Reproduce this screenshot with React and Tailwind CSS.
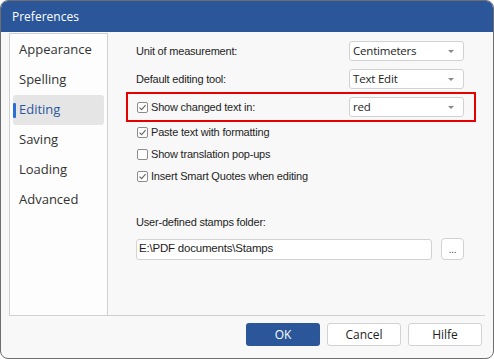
import React from "react";

function Caret() {
  return (
    <svg width="6" height="3" viewBox="0 0 6 3" className="shrink-0">
      <path d="M0 0 L6 0 L3 3 Z" fill="#8a8a8a" />
    </svg>
  );
}

function Dropdown({ value }) {
  return (
    <div className="w-[115px] h-[20px] bg-white border border-[#d2d2d2] rounded-[3px] flex items-center justify-between pl-[3px] pr-[9px] text-[11.5px] text-[#1e1e1e] font-['Open_Sans',sans-serif]">
      <span>{value}</span>
      <Caret />
    </div>
  );
}

function Box({ checked }) {
  return (
    <div className="w-[11px] h-[11px] bg-white border border-[#8c8c8c] rounded-[2px] flex items-center justify-center mr-[3px]">
      {checked && (
        <svg width="9" height="9" viewBox="0 0 9 9">
          <path d="M1.5 4.6 L3.6 6.7 L7.6 2.2" fill="none" stroke="#6a6a6a" strokeWidth="1.2" />
        </svg>
      )}
    </div>
  );
}

function Check({ checked, label }) {
  return (
    <div className="flex items-center h-[22px] pl-[1px]">
      <Box checked={checked} />
      <span>{label}</span>
    </div>
  );
}

export default function App() {
  const nav = ["Appearance", "Spelling", "Editing", "Saving", "Loading", "Advanced"];

  return (
    <div className="w-[494px] h-[359px] bg-[#f8f8f8] border border-[#6e6e6e] rounded-[8px] overflow-hidden flex flex-col font-['Liberation_Sans',Arial,sans-serif]">
      {/* title bar */}
      <div className="h-[31px] shrink-0 bg-[#2b579a] flex items-center pl-[11px] text-white text-[12px] font-['Open_Sans',sans-serif]">
        Preferences
      </div>

      <div className="mx-[8px] h-[284px] flex border-b border-[#d0d0d0]">
        {/* sidebar */}
        <div className="w-[99px] mt-[1px] bg-[#fdfdfd] border border-b-0 border-[#d0d0d0] pt-[1px] px-[3px] font-['Open_Sans',sans-serif] text-[13px] text-[#333]">
          {nav.map((n) =>
            n === "Editing" ? (
              <div key={n} className="h-[30px] bg-[#e5e5e5] rounded-[3px] flex items-center relative pl-[6px] text-[#2b579a]">
                <div className="absolute left-0 top-[8px] w-[3px] h-[15px] bg-[#2b6fd6] rounded-[1px]" />
                {n}
              </div>
            ) : (
              <div key={n} className="h-[30px] flex items-center pl-[6px]">
                {n}
              </div>
            )
          )}
        </div>

        {/* content */}
        <div className="flex-1 relative pl-[28px] pt-[5px] text-[11px] tracking-[-0.2px] text-[#1e1e1e]">
          <div className="flex items-center h-[28px]">
            <span className="w-[213px]">Unit of measurement:</span>
            <Dropdown value="Centimeters" />
          </div>
          <div className="flex items-center h-[28px]">
            <span className="w-[213px]">Default editing tool:</span>
            <Dropdown value="Text Edit" />
          </div>
          <div className="flex items-center h-[28px]">
            <div className="w-[213px] pl-[1px] flex items-center">
              <Box checked />
              <span>Show changed text in:</span>
            </div>
            <Dropdown value="red" />
          </div>
          <div className="absolute left-[18px] top-[60px] w-[350px] h-[30px] border-2 border-[#e60000] pointer-events-none" />

          <Check checked label="Paste text with formatting" />
          <Check label="Show translation pop-ups" />
          <Check checked label="Insert Smart Quotes when editing" />

          <div className="mt-[26px] h-[18px] flex items-center">User-defined stamps folder:</div>
          <div className="mt-[7px] flex items-center">
            <div className="w-[296px] h-[21px] bg-white border border-[#d2d2d2] rounded-[3px] flex items-center pl-[2px] text-[11.5px]">
              E:\PDF documents\Stamps
            </div>
            <div className="ml-[9px] w-[23px] h-[22px] bg-white border border-[#d2d2d2] rounded-[4px] flex items-center justify-center text-[10px] text-[#444]">
              ...
            </div>
          </div>
        </div>
      </div>

      {/* footer */}
      <div className="flex justify-end gap-[7px] pr-[11px] pt-[7px] text-[12px] font-['Open_Sans',sans-serif]">
        <button className="w-[74px] h-[23px] bg-[#2b579a] text-white rounded-[3px]">OK</button>
        <button className="w-[74px] h-[23px] bg-white border border-[#d2d2d2] text-[#1e1e1e] rounded-[3px]">Cancel</button>
        <button className="w-[74px] h-[23px] bg-white border border-[#d2d2d2] text-[#1e1e1e] rounded-[3px]">Hilfe</button>
      </div>
    </div>
  );
}
